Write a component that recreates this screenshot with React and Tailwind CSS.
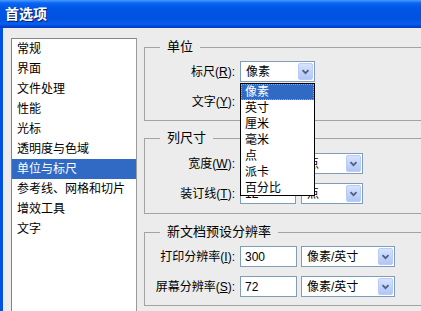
const listItems = ['常规', '界面', '文件处理', '性能', '光标', '透明度与色域', '单位与标尺', '参考线、网格和切片', '增效工具', '文字'];
const units = ['像素', '英寸', '厘米', '毫米', '点', '派卡', '百分比'];

function Arrow() {
  return (
    <span className="mr-[1px] flex h-[17px] w-[15px] shrink-0 items-center justify-center rounded-[2px] border border-[#b7ccf8] bg-[linear-gradient(to_bottom,#d6e3fe,#b2c6f5)]">
      <svg width="9" height="6" viewBox="0 0 9 6">
        <path d="M1.5 1.2l3 3 3-3" stroke="#4d6185" strokeWidth="1.8" fill="none" />
      </svg>
    </span>
  );
}

function Combo({ className, value, children }) {
  return (
    <div className={`relative flex h-[21px] shrink-0 items-center border border-[#7f9db9] bg-white ${className}`}>
      <span className="flex-1 pl-[5px] text-[12px] leading-none text-black">{value}</span>
      <Arrow />
      {children}
    </div>
  );
}

function Field({ className, value }) {
  return (
    <div className={`flex h-[21px] shrink-0 items-center border border-[#7f9db9] bg-white pl-[4px] text-[12px] leading-none text-black ${className}`}>
      {value}
    </div>
  );
}

function Label({ text, k }) {
  return (
    <div className="w-[90px] shrink-0 text-right text-[12px] leading-none text-black">
      {text}(<u>{k}</u>):
    </div>
  );
}

function Group({ title, className, children }) {
  return (
    <fieldset className={`w-[300px] shrink-0 border border-[#a3a3a3] ${className}`}>
      <legend className="ml-[15px] px-[7px] text-[13px] leading-[16px] text-black">{title}</legend>
      <div className="flex flex-col gap-[9px]">{children}</div>
    </fieldset>
  );
}

export default function App() {
  return (
    <div className="h-[311px] w-[421px] overflow-hidden bg-[#ececec] font-['Liberation_Sans','Noto_Sans_CJK_SC',sans-serif]">
      <div className="flex h-[28px] items-center bg-[linear-gradient(to_bottom,#4a9cff_0px,#0a66f2_3px,#0056e6_8px,#0052e0_19px,#085ef2_24px,#0049d8_26px,#003bc8_28px)] pl-[5px]">
        <span className="text-[14px] font-bold leading-none text-white [text-shadow:1px_1px_0_#0a1e6e]">首选项</span>
      </div>

      <div className="flex h-[283px] gap-[7px] border-l-[3px] border-[#0052e4] pl-[8px] pt-[10px]">
        <div className="h-[300px] w-[126px] shrink-0 border border-[#858585] border-r-[#9a9a9a] bg-white">
          {listItems.map((item, i) => (
            <div
              key={item}
              className={`flex h-[20px] items-center pl-[5px] text-[12px] leading-none ${i === 6 ? 'bg-[#316ac5] text-white' : 'text-black'}`}
            >
              {item}
            </div>
          ))}
        </div>

        <div className="mt-[1px] flex flex-col">
          <Group title="单位" className="h-[82px] pt-[6px]">
            <div className="flex items-center">
              <Label text="标尺" k="R" />
              <Combo className="ml-[5px] w-[75px]" value="像素">
                <div className="absolute left-[-1px] top-[21px] z-10 h-[113px] w-[75px] border border-black bg-white">
                  {units.map((u, i) => (
                    <div
                      key={u}
                      className={
                        i === 0
                          ? 'flex h-[16px] items-center border border-dotted border-[#e3a23a] bg-[#316ac5] pl-[3px] text-[12px] leading-none text-white'
                          : 'flex h-[16px] items-center pl-[4px] text-[12px] leading-none text-black'
                      }
                    >
                      {u}
                    </div>
                  ))}
                </div>
              </Combo>
            </div>
            <div className="flex items-center">
              <Label text="文字" k="Y" />
              <Combo className="ml-[5px] w-[75px]" value="" />
            </div>
          </Group>

          <Group title="列尺寸" className="mt-[9px] h-[84px] pt-[7px]">
            <div className="flex items-center">
              <Label text="宽度" k="W" />
              <Field className="ml-[5px] w-[56px]" value="" />
              <Combo className="ml-[5px] w-[62px]" value="点" />
            </div>
            <div className="flex items-center">
              <Label text="装订线" k="T" />
              <Field className="ml-[5px] w-[56px]" value="12" />
              <Combo className="ml-[5px] w-[62px]" value="点" />
            </div>
          </Group>

          <Group title="新文档预设分辨率" className="mt-[10px] h-[82px] pt-[6px]">
            <div className="flex items-center">
              <Label text="打印分辨率" k="I" />
              <Field className="ml-[5px] w-[57px]" value="300" />
              <Combo className="ml-[4px] w-[94px]" value="像素/英寸" />
            </div>
            <div className="flex items-center">
              <Label text="屏幕分辨率" k="S" />
              <Field className="ml-[5px] w-[57px]" value="72" />
              <Combo className="ml-[4px] w-[94px]" value="像素/英寸" />
            </div>
          </Group>
        </div>
      </div>
    </div>
  );
}
